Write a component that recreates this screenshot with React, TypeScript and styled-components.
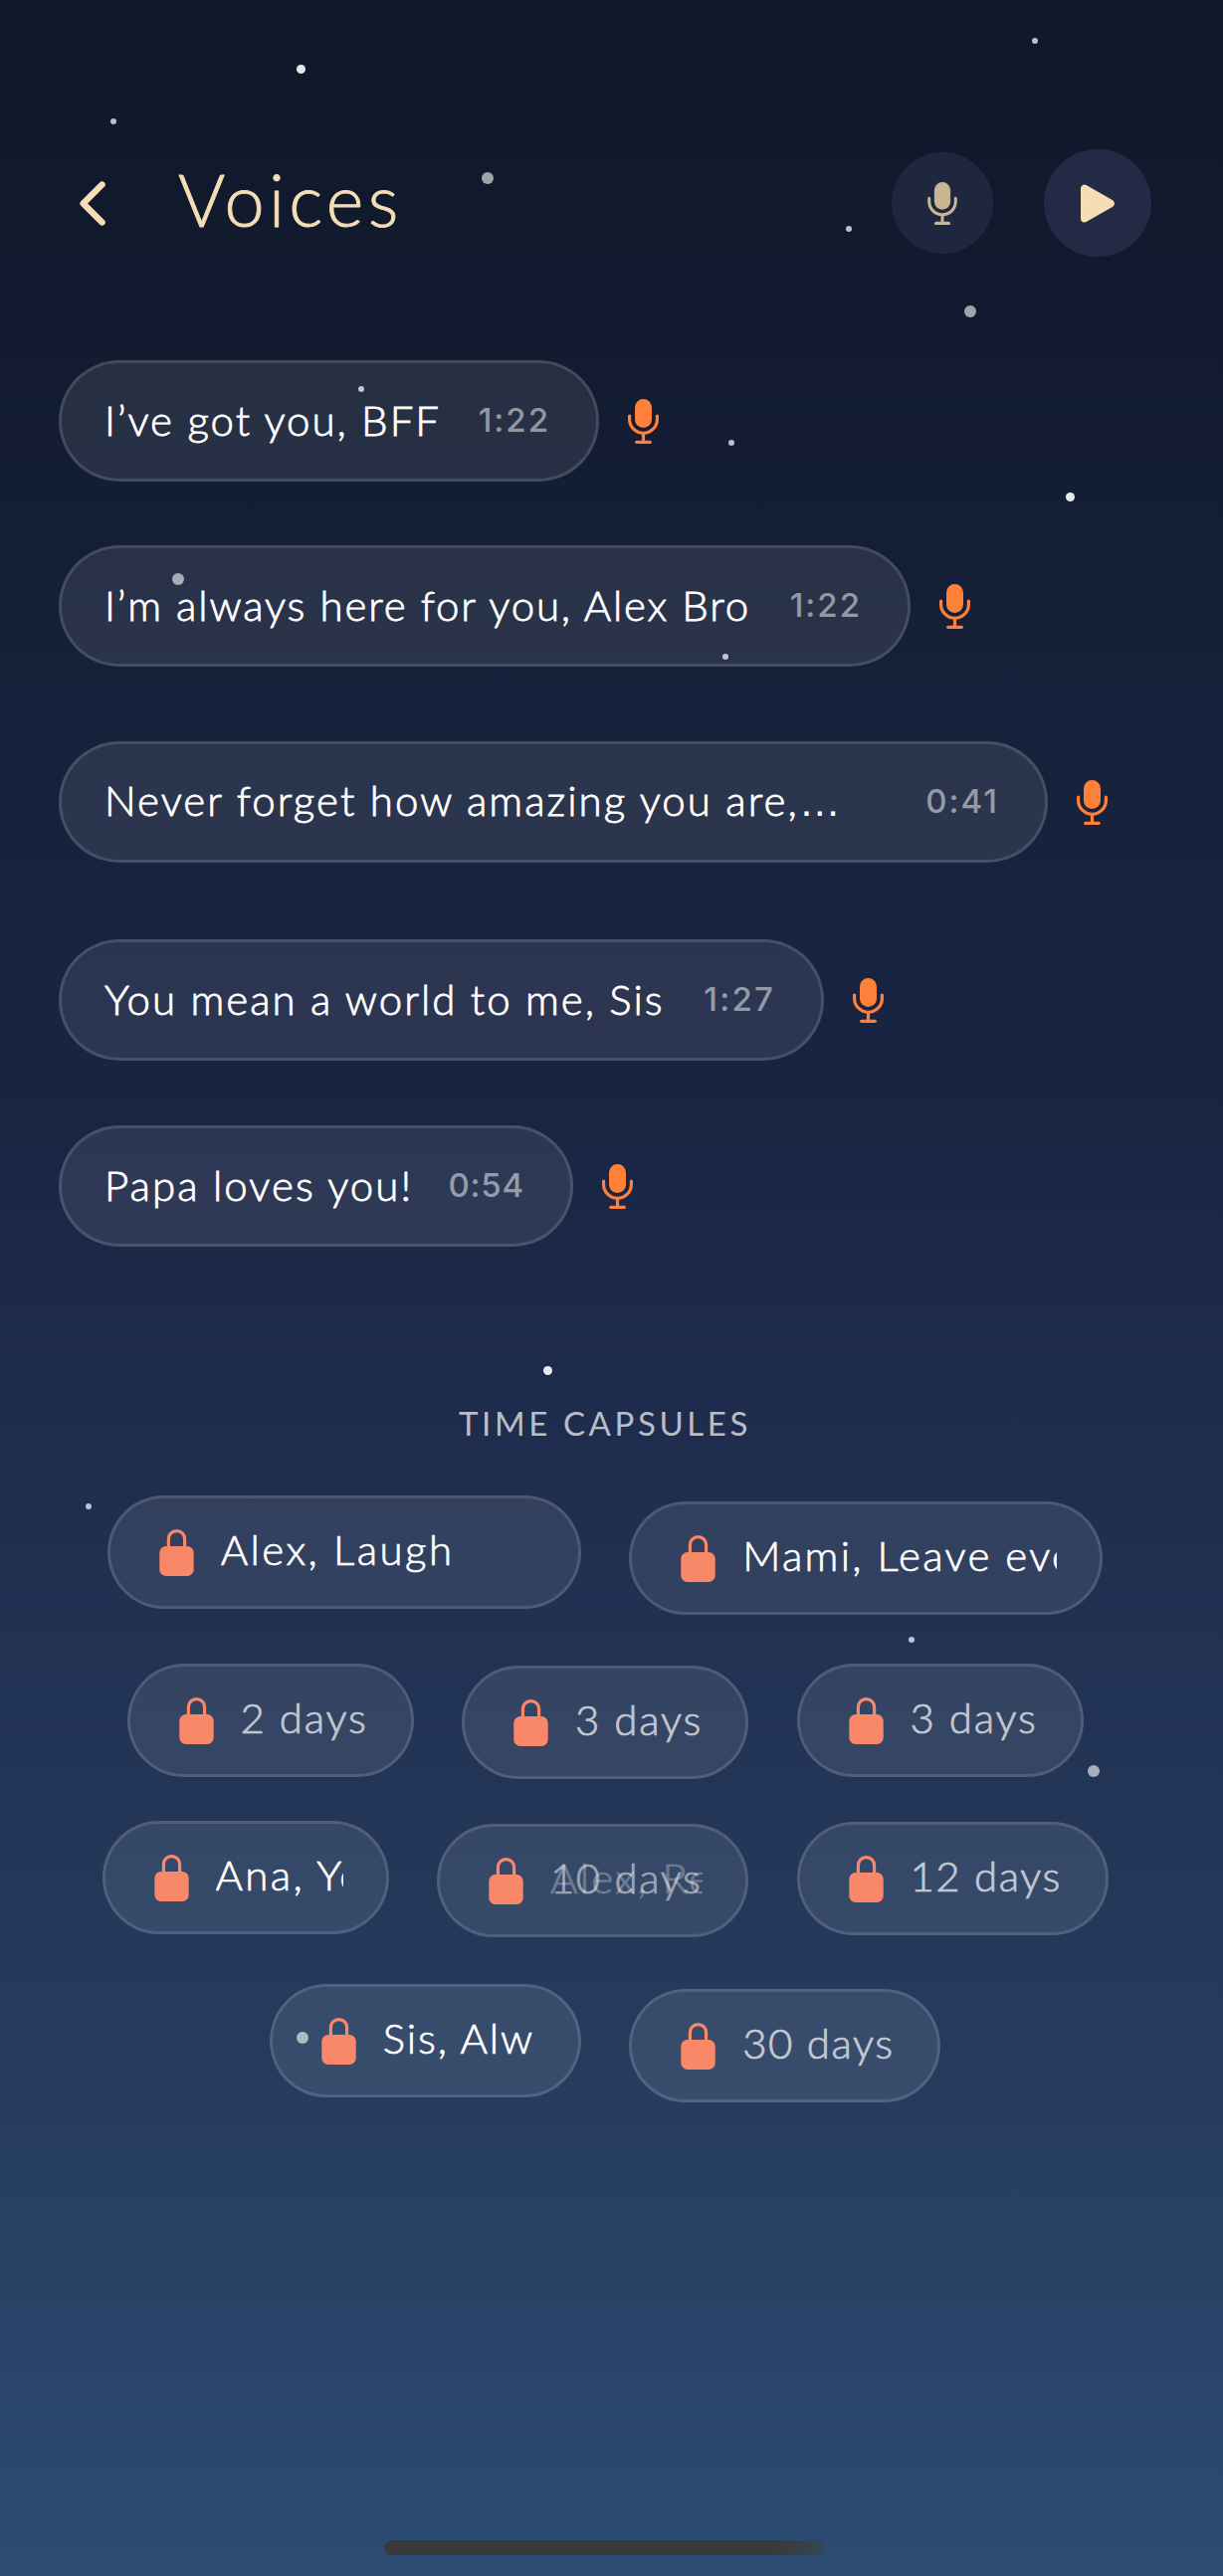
import React from "react";
import styled, { createGlobalStyle } from "styled-components";

const GlobalStyle = createGlobalStyle`
  *, *::before, *::after { box-sizing: border-box; }
  body { margin: 0; background: #111829; }
`;

const Screen = styled.main`
  position: relative;
  display: flex;
  flex-direction: column;
  height: 2589px;
  overflow: hidden;
  font-family: Lato, "Liberation Sans", sans-serif;
  font-weight: 300;
  color: #fff;
  background: linear-gradient(
    180deg,
    #101728 0px,
    #121b30 340px,
    #16213b 720px,
    #1a2544 1130px,
    #1f2e4f 1500px,
    #233658 1820px,
    #263d60 2130px,
    #2c4c71 2589px
  );
`;

const Header = styled.header`
  display: flex;
  align-items: center;
  height: 108px;
  margin-top: 150px;
  padding: 0 72px 0 80px;
`;

const BackButton = styled.button`
  display: flex;
  margin: 0;
  padding: 0;
  border: 0;
  background: none;
  color: #f5ddb4;
`;

const Title = styled.h1`
  flex: 1;
  margin: 0 0 0 73px;
  padding-bottom: 8px;
  font-size: 72px;
  font-weight: 300;
  line-height: 86px;
  letter-spacing: 4.3px;
  color: #f5ddb4;
  -webkit-text-stroke: 0.9px currentColor;
`;

const RoundButton = styled.button<{ $size: number; $bg: string; $color: string }>`
  display: flex;
  align-items: center;
  justify-content: center;
  width: ${(p) => p.$size}px;
  height: ${(p) => p.$size}px;
  margin: 0 0 0 51px;
  padding: 0;
  border: 0;
  border-radius: 50%;
  background: ${(p) => p.$bg};
  color: ${(p) => p.$color};
`;

const VoiceList = styled.ul`
  display: flex;
  flex-direction: column;
  margin: 104px 0 0;
  padding: 0 0 0 59px;
  list-style: none;
`;

const VoiceRow = styled.li<{ $gap: number }>`
  display: flex;
  align-items: center;
  gap: 29px;
  margin-top: ${(p) => p.$gap}px;
  color: #ff8038;
`;

const VoicePill = styled.div<{ $width: number }>`
  display: flex;
  align-items: center;
  justify-content: space-between;
  width: ${(p) => p.$width}px;
  height: 122px;
  padding: 0 46px 3px 43px;
  border: 3px solid rgba(255, 255, 255, 0.13);
  border-radius: 61px;
  background: rgba(255, 255, 255, 0.085);
  color: #fff;
  white-space: nowrap;
`;

const Message = styled.span<{ $track: number }>`
  font-size: 42px;
  line-height: 52px;
  letter-spacing: ${(p) => p.$track}px;
  -webkit-text-stroke: 0.8px currentColor;
`;

const Ellipsis = styled.span`
  font-family: "Liberation Sans", sans-serif;
  letter-spacing: 0;
  -webkit-text-stroke: 0;
`;

const Duration = styled.time<{ $track: number }>`
  font-family: Inter, "Liberation Sans", sans-serif;
  font-size: 33px;
  font-weight: 500;
  line-height: 40px;
  letter-spacing: ${(p) => p.$track}px;
  color: rgba(255, 255, 255, 0.5);
`;

const SectionTitle = styled.h2`
  width: 1216px;
  margin: 157px 0 53px;
  font-size: 33px;
  font-weight: 400;
  line-height: 40px;
  letter-spacing: 3.6px;
  text-align: center;
  color: rgba(255, 255, 255, 0.7);
`;

const CapsuleRow = styled.div<{ $height: number; $after: number }>`
  display: flex;
  align-items: flex-start;
  justify-content: center;
  gap: 48.5px;
  width: 1216px;
  height: ${(p) => p.$height}px;
  margin-bottom: ${(p) => p.$after}px;
`;

const CapsulePill = styled.div<{ $width: number; $drop: number }>`
  display: flex;
  align-items: center;
  gap: 27px;
  width: ${(p) => p.$width}px;
  height: 114px;
  margin-top: ${(p) => p.$drop}px;
  padding: 0 43px 0 49px;
  border: 3px solid rgba(255, 255, 255, 0.13);
  border-radius: 57px;
  background: rgba(255, 255, 255, 0.085);
  color: #f98869;
  svg { flex: none; }
`;

const LabelStack = styled.div`
  display: grid;
  flex: 1;
  min-width: 0;
  overflow: hidden;
  padding-bottom: 6px;
`;

const Label = styled.span<{ $track: number; $alpha: number }>`
  grid-area: 1 / 1;
  min-width: 0;
  font-size: 42px;
  line-height: 52px;
  letter-spacing: ${(p) => p.$track}px;
  white-space: nowrap;
  color: #fff;
  opacity: ${(p) => p.$alpha};
  -webkit-text-stroke: 0.7px currentColor;
`;

const HomeIndicator = styled.div`
  flex: none;
  width: 444px;
  height: 15px;
  margin: auto 0 21px 386px;
  border-radius: 9px;
  background: linear-gradient(90deg, #3a3a3a 0%, #3a3a3a 88%, #384048 95%, #35475c 100%);
`;

const Star = styled.i<{ $x: number; $y: number; $size: number; $alpha: number }>`
  position: absolute;
  left: ${(p) => p.$x - p.$size / 2}px;
  top: ${(p) => p.$y - p.$size / 2}px;
  width: ${(p) => p.$size}px;
  height: ${(p) => p.$size}px;
  border-radius: 50%;
  background: rgba(255, 255, 255, ${(p) => p.$alpha});
`;

const MicIcon = ({ width = 31, height = 45 }: { width?: number; height?: number }) => (
  <svg width={width} height={height} viewBox="0 0 31 45" fill="none" stroke="currentColor" strokeWidth="3.2" strokeLinecap="round">
    <rect x="7" y="0" width="17" height="29" rx="8.5" fill="currentColor" stroke="none" />
    <path d="M1.6 17V20.4a13.9 13.9 0 0 0 27.8 0V17" />
    <path d="M15.5 35v8" strokeLinecap="butt" />
    <path d="M8.7 43.3h13.6" />
  </svg>
);

const LockIcon = () => (
  <svg width="35" height="47" viewBox="0 0 35 47" fill="none" stroke="currentColor" strokeWidth="3.2">
    <rect x="0.3" y="17" width="34.4" height="30" rx="6.5" fill="currentColor" stroke="none" />
    <path d="M9.4 18.5V9.7a8.1 8.1 0 0 1 16.2 0V18.5" />
  </svg>
);

const BackIcon = () => (
  <svg width="26" height="45" viewBox="0 0 26 45" fill="none" stroke="currentColor" strokeWidth="6.4" strokeLinecap="round" strokeLinejoin="round">
    <path d="M22.6 3.6L3.6 22.5l19 18.9" />
  </svg>
);

const PlayIcon = () => (
  <svg width="34" height="39" viewBox="0 0 34 39" fill="currentColor" stroke="currentColor" strokeWidth="8" strokeLinejoin="round">
    <path d="M4 4.6v29.8L29.8 19.5z" />
  </svg>
);

const voices = [
  { text: "I’ve got you, BFF", time: "1:22", width: 543, gap: 0, track: 2, timeTrack: 2 },
  { text: "I’m always here for you, Alex Bro", time: "1:22", width: 856, gap: 64, track: 1.84, timeTrack: 2 },
  { text: "Never forget how amazing you are,", more: true, time: "0:41", width: 994, gap: 75, track: 2.05, timeTrack: 2 },
  { text: "You mean a world to me, Sis", time: "1:27", width: 769, gap: 77, track: 2, timeTrack: 2.2 },
  { text: "Papa loves you!", time: "0:54", width: 517, gap: 65, track: 2.05, timeTrack: 0.8 },
];

type LabelData = { text: string; track: number; alpha: number };
type CapsuleData = { width: number; drop: number; labels: LabelData[] };

const rows: { height: number; after: number; items: CapsuleData[] }[] = [
  {
    height: 120,
    after: 49,
    items: [
      { width: 476, drop: 0, labels: [{ text: "Alex, Laugh", track: 2.45, alpha: 1 }] },
      { width: 476, drop: 6, labels: [{ text: "Mami, Leave eve", track: 2.3, alpha: 1 }] },
    ],
  },
  {
    height: 116,
    after: 42,
    items: [
      { width: 288, drop: 0, labels: [{ text: "2 days", track: 1.8, alpha: 0.7 }] },
      { width: 288, drop: 2, labels: [{ text: "3 days", track: 1.8, alpha: 0.7 }] },
      { width: 288, drop: 0, labels: [{ text: "3 days", track: 1.8, alpha: 0.7 }] },
    ],
  },
  {
    height: 117,
    after: 47,
    items: [
      { width: 288, drop: 0, labels: [{ text: "Ana, Yo", track: 2.4, alpha: 1 }] },
      {
        width: 313,
        drop: 3,
        labels: [
          { text: "Alex, Re", track: 2.3, alpha: 0.28 },
          { text: "10 days", track: 1.5, alpha: 0.5 },
        ],
      },
      { width: 313, drop: 1, labels: [{ text: "12 days", track: 1.5, alpha: 0.7 }] },
    ],
  },
  {
    height: 119,
    after: 0,
    items: [
      { width: 313, drop: 0, labels: [{ text: "Sis, Alw", track: 1.85, alpha: 1 }] },
      { width: 313, drop: 5, labels: [{ text: "30 days", track: 1.5, alpha: 0.7 }] },
    ],
  },
];

const stars: [number, number, number, number][] = [
  [1040, 41, 6, 0.72],
  [302.5, 69.5, 9, 0.9],
  [114, 122, 6, 0.72],
  [490, 179, 12, 0.6],
  [853, 230, 6, 0.72],
  [975, 313, 12, 0.6],
  [363, 391, 6, 0.72],
  [735, 445, 6, 0.72],
  [1075.5, 499.5, 9, 0.9],
  [179, 582, 12, 0.6],
  [729, 660, 6, 0.72],
  [550.5, 1377.5, 9, 0.9],
  [89, 1514, 6, 0.72],
  [916, 1648, 6, 0.72],
  [1099, 1780, 12, 0.6],
  [304, 2048, 12, 0.6],
];

export default function App() {
  return (
    <>
      <GlobalStyle />
      <Screen>
        <Header>
          <BackButton aria-label="Back">
            <BackIcon />
          </BackButton>
          <Title>Voices</Title>
          <RoundButton $size={102} $bg="#1f2740" $color="#c7b594" aria-label="Record">
            <MicIcon width={30} height={43} />
          </RoundButton>
          <RoundButton $size={108} $bg="#222a45" $color="#f5ddb4" aria-label="Play">
            <PlayIcon />
          </RoundButton>
        </Header>

        <VoiceList>
          {voices.map((v) => (
            <VoiceRow key={v.text} $gap={v.gap}>
              <VoicePill $width={v.width}>
                <Message $track={v.track}>
                  {v.text}
                  {v.more && <Ellipsis>…</Ellipsis>}
                </Message>
                <Duration $track={v.timeTrack}>{v.time}</Duration>
              </VoicePill>
              <MicIcon />
            </VoiceRow>
          ))}
        </VoiceList>

        <SectionTitle>TIME CAPSULES</SectionTitle>
        {rows.map((row, r) => (
          <CapsuleRow key={r} $height={row.height} $after={row.after}>
            {row.items.map((item, i) => (
              <CapsulePill key={i} $width={item.width} $drop={item.drop}>
                <LockIcon />
                <LabelStack>
                  {item.labels.map((l) => (
                    <Label key={l.text} $track={l.track} $alpha={l.alpha}>
                      {l.text}
                    </Label>
                  ))}
                </LabelStack>
              </CapsulePill>
            ))}
          </CapsuleRow>
        ))}

        <HomeIndicator />
        {stars.map(([x, y, size, alpha]) => (
          <Star key={`${x}-${y}`} $x={x} $y={y} $size={size} $alpha={alpha} />
        ))}
      </Screen>
    </>
  );
}
